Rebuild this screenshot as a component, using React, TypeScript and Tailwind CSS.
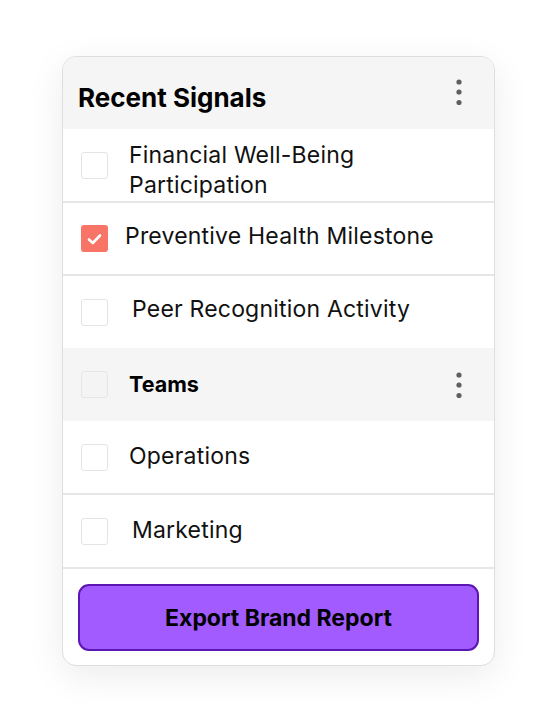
import React from "react";

function Kebab() {
  return (
    <svg width="8" height="26" viewBox="0 0 8 26" className="block">
      <circle cx="4" cy="3" r="2.6" fill="#5f5f5f" />
      <circle cx="4" cy="13" r="2.6" fill="#5f5f5f" />
      <circle cx="4" cy="23.5" r="2.6" fill="#5f5f5f" />
    </svg>
  );
}

function Box({ checked = false, faint = false }: { checked?: boolean; faint?: boolean }) {
  if (checked) {
    return (
      <div className="w-[27px] h-[27px] rounded-[3px] bg-[#f87466] flex items-center justify-center shrink-0">
        <svg width="15" height="12" viewBox="0 0 15 12">
          <path d="M2 6.5 L5.8 10 L13 2.5" fill="none" stroke="white" strokeWidth="2.6" strokeLinecap="round" strokeLinejoin="round" />
        </svg>
      </div>
    );
  }
  return (
    <div
      className={`w-[27px] h-[27px] rounded-[3px] border-[1.5px] shrink-0 ${
        faint ? "border-[#e6e6e6] bg-[#f4f4f4]" : "border-[#e4e4e4] bg-white"
      }`}
    />
  );
}

export default function App() {
  const font = { fontFamily: '"Inter", "Noto Sans", sans-serif' };
  return (
    <div className="w-[552px] h-[716px] bg-white pt-[56px] pl-[62px]" style={font}>
      <div className="w-[433px] rounded-[14px] border-[1.5px] border-[#dedede] bg-white overflow-hidden shadow-[0_10px_36px_rgba(0,0,0,0.08)]">
        {/* header */}
        <div className="h-[72px] bg-[#f5f5f5] flex items-center justify-between pl-[15px] pr-[31px]">
          <span className="text-[26px] font-bold text-black leading-none pt-[10px]">Recent Signals</span>
          <div className="pb-[2px]"><Kebab /></div>
        </div>

        {/* row 1 */}
        <div className="h-[74px] flex items-center pl-[18px] border-b-2 border-[#e6e6e6]">
          <Box />
          <div className="ml-[21px] text-[23px] leading-[30px] tracking-[0.2px] text-[#111] pt-[10px]">
            Financial Well-Being
            <br />
            Participation
          </div>
        </div>

        {/* row 2 */}
        <div className="h-[73px] flex items-center pl-[18px] border-b-2 border-[#e6e6e6]">
          <Box checked />
          <div className="ml-[17px] text-[23px] leading-[30px] tracking-[0.2px] text-[#111] pb-[6px]">
            Preventive Health Milestone
          </div>
        </div>

        {/* row 3 */}
        <div className="h-[72px] flex items-center pl-[18px]">
          <Box />
          <div className="ml-[24px] text-[23px] leading-[30px] tracking-[0.2px] text-[#111] pb-[6px]">
            Peer Recognition Activity
          </div>
        </div>

        {/* teams */}
        <div className="h-[73px] bg-[#f5f5f5] flex items-center justify-between pl-[18px] pr-[31px]">
          <div className="flex items-center">
            <Box faint />
            <div className="ml-[21px] text-[21.5px] font-bold leading-[30px] text-black pb-[2px]">Teams</div>
          </div>
          <Kebab />
        </div>

        {/* operations */}
        <div className="h-[74px] flex items-center pl-[18px] border-b-2 border-[#e6e6e6]">
          <Box />
          <div className="ml-[21px] text-[23px] leading-[30px] tracking-[0.2px] text-[#111] pb-[2px]">
            Operations
          </div>
        </div>

        {/* marketing */}
        <div className="h-[74px] flex items-center pl-[18px] border-b-2 border-[#e6e6e6]">
          <Box />
          <div className="ml-[24px] text-[23px] leading-[30px] tracking-[0.2px] text-[#111] pb-[2px]">
            Marketing
          </div>
        </div>

        {/* footer */}
        <div className="pt-[15px] pb-[14px] px-[15px]">
          <button className="w-full h-[67px] rounded-[11px] bg-[#a25bff] border-2 border-[#5b16b3] text-[23px] font-bold text-black pt-[2px]">
            Export Brand Report
          </button>
        </div>
      </div>
    </div>
  );
}
